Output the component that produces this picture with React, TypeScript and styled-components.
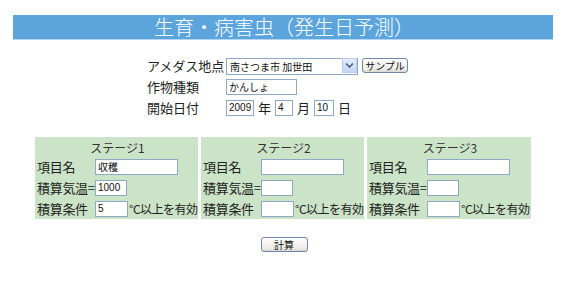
import React from 'react';
import styled, { createGlobalStyle } from 'styled-components';

const GlobalStyle = createGlobalStyle`
  html, body {
    margin: 0;
    padding: 0;
    background: #ffffff;
  }
  body {
    font-family: 'Noto Sans CJK JP', 'Noto Sans', sans-serif;
    color: #222222;
  }
`;

const Page = styled.div`
  width: 540px;
  margin-left: 13px;
  padding-top: 15px;
`;

const TitleBar = styled.h1`
  margin: 0;
  height: 24px;
  line-height: 24px;
  background: #5ba5dc;
  border-bottom: 1px solid #b4d6f2;
  color: #ffffff;
  font-size: 20px;
  font-weight: 300;
  text-align: center;
  padding-left: 2px;
`;

const TopForm = styled.div`
  display: grid;
  grid-template-columns: 79px auto;
  row-gap: 4px;
  margin: 17px 0 0 134px;
  font-size: 13px;
  line-height: 17px;
`;

const Label = styled.div`
  height: 17px;
  white-space: nowrap;
`;

const Field = styled.div`
  display: flex;
  align-items: center;
  gap: 3px;
  height: 17px;
`;

const TextBox = styled.input<{ $w: number }>`
  box-sizing: border-box;
  width: ${({ $w }) => $w}px;
  height: 16px;
  margin: 0;
  padding: 0 2px;
  border: 1px solid #8fa9c4;
  background: #ffffff;
  font-family: 'Liberation Sans', 'Noto Sans CJK JP', sans-serif;
  font-size: 10px;
  color: #111111;
  outline: none;
`;

const SelectWrap = styled.div`
  position: relative;
  width: 132px;
  height: 17px;
`;

const Select = styled.select`
  appearance: none;
  box-sizing: border-box;
  width: 100%;
  height: 17px;
  margin: 0;
  padding: 0 0 0 3px;
  border: 1px solid #8fa9c4;
  background: #ffffff;
  font-family: 'Noto Sans CJK JP', sans-serif;
  font-size: 10px;
  color: #111111;
`;

const ArrowBox = styled.span`
  position: absolute;
  right: 1px;
  top: 1px;
  width: 15px;
  height: 15px;
  box-sizing: border-box;
  border: 1px solid #b9cdef;
  background: linear-gradient(#e4eefc, #c0d5f6);
  display: flex;
  align-items: center;
  justify-content: center;
  pointer-events: none;
`;

const XpButton = styled.button<{ $w: number }>`
  box-sizing: border-box;
  width: ${({ $w }) => $w}px;
  height: 15px;
  margin: 0;
  padding: 0;
  border: 1px solid #6f87a8;
  border-radius: 3px;
  background: linear-gradient(#ffffff, #ecebe6 80%, #d8d6cd);
  font-family: 'Noto Sans CJK JP', sans-serif;
  font-size: 10px;
  line-height: 13px;
  color: #111111;
`;

const SampleButton = styled(XpButton)`
  margin-left: 1px;
`;

const Unit = styled.span`
  font-size: 13px;
  margin: 0 1px;
`;

const StageTable = styled.div`
  display: grid;
  grid-template-columns: 163px 163px 164px;
  column-gap: 3px;
  width: 495px;
  margin: 21px 0 0 22px;
`;

const Stage = styled.div`
  background: #cbe4c7;
  height: 82px;
  padding: 2px 0 0 2px;
  box-sizing: border-box;
  font-size: 13px;
  line-height: 17px;
`;

const StageTitle = styled.div`
  text-align: center;
  color: #333333;
  font-size: 12px;
  height: 17px;
  margin-bottom: 2px;
`;

const StageRow = styled.div`
  display: flex;
  align-items: center;
  height: 17px;
  margin-bottom: 4px;
  white-space: nowrap;
`;

const StageLabel = styled.span`
  width: 58px;
  flex-shrink: 0;
  letter-spacing: -0.3px;
`;

const Note = styled.span`
  font-size: 12px;
  letter-spacing: -0.5px;
  margin-left: 1px;
`;

const Footer = styled.div`
  display: flex;
  justify-content: center;
  padding-left: 2px;
  margin-top: 18px;
`;

const stages = [
  { title: 'ステージ1', name: '収穫', sum: '1000', cond: '5' },
  { title: 'ステージ2', name: '', sum: '', cond: '' },
  { title: 'ステージ3', name: '', sum: '', cond: '' },
];

export default function App() {
  return (
    <>
      <GlobalStyle />
      <Page>
        <TitleBar>生育・病害虫（発生日予測）</TitleBar>

        <TopForm>
          <Label>アメダス地点</Label>
          <Field>
            <SelectWrap>
              <Select defaultValue="kaseda">
                <option value="kaseda">南さつま市 加世田</option>
              </Select>
              <ArrowBox>
                <svg width="9" height="7" viewBox="0 0 9 7">
                  <path d="M1 1.5 L4.5 5 L8 1.5" fill="none" stroke="#4d6185" strokeWidth="1.6" />
                </svg>
              </ArrowBox>
            </SelectWrap>
            <SampleButton $w={46} type="button">サンプル</SampleButton>
          </Field>

          <Label>作物種類</Label>
          <Field>
            <TextBox $w={71} defaultValue="かんしょ" />
          </Field>

          <Label>開始日付</Label>
          <Field>
            <TextBox $w={28} defaultValue="2009" />
            <Unit>年</Unit>
            <TextBox $w={18} defaultValue="4" />
            <Unit>月</Unit>
            <TextBox $w={20} defaultValue="10" />
            <Unit>日</Unit>
          </Field>
        </TopForm>

        <StageTable>
          {stages.map((s) => (
            <Stage key={s.title}>
              <StageTitle>{s.title}</StageTitle>
              <StageRow>
                <StageLabel>項目名</StageLabel>
                <TextBox $w={83} defaultValue={s.name} />
              </StageRow>
              <StageRow>
                <StageLabel>積算気温=</StageLabel>
                <TextBox $w={32} defaultValue={s.sum} />
              </StageRow>
              <StageRow>
                <StageLabel>積算条件</StageLabel>
                <TextBox $w={33} defaultValue={s.cond} />
                <Note>°C以上を有効</Note>
              </StageRow>
            </Stage>
          ))}
        </StageTable>

        <Footer>
          <XpButton $w={47} type="button">計算</XpButton>
        </Footer>
      </Page>
    </>
  );
}
